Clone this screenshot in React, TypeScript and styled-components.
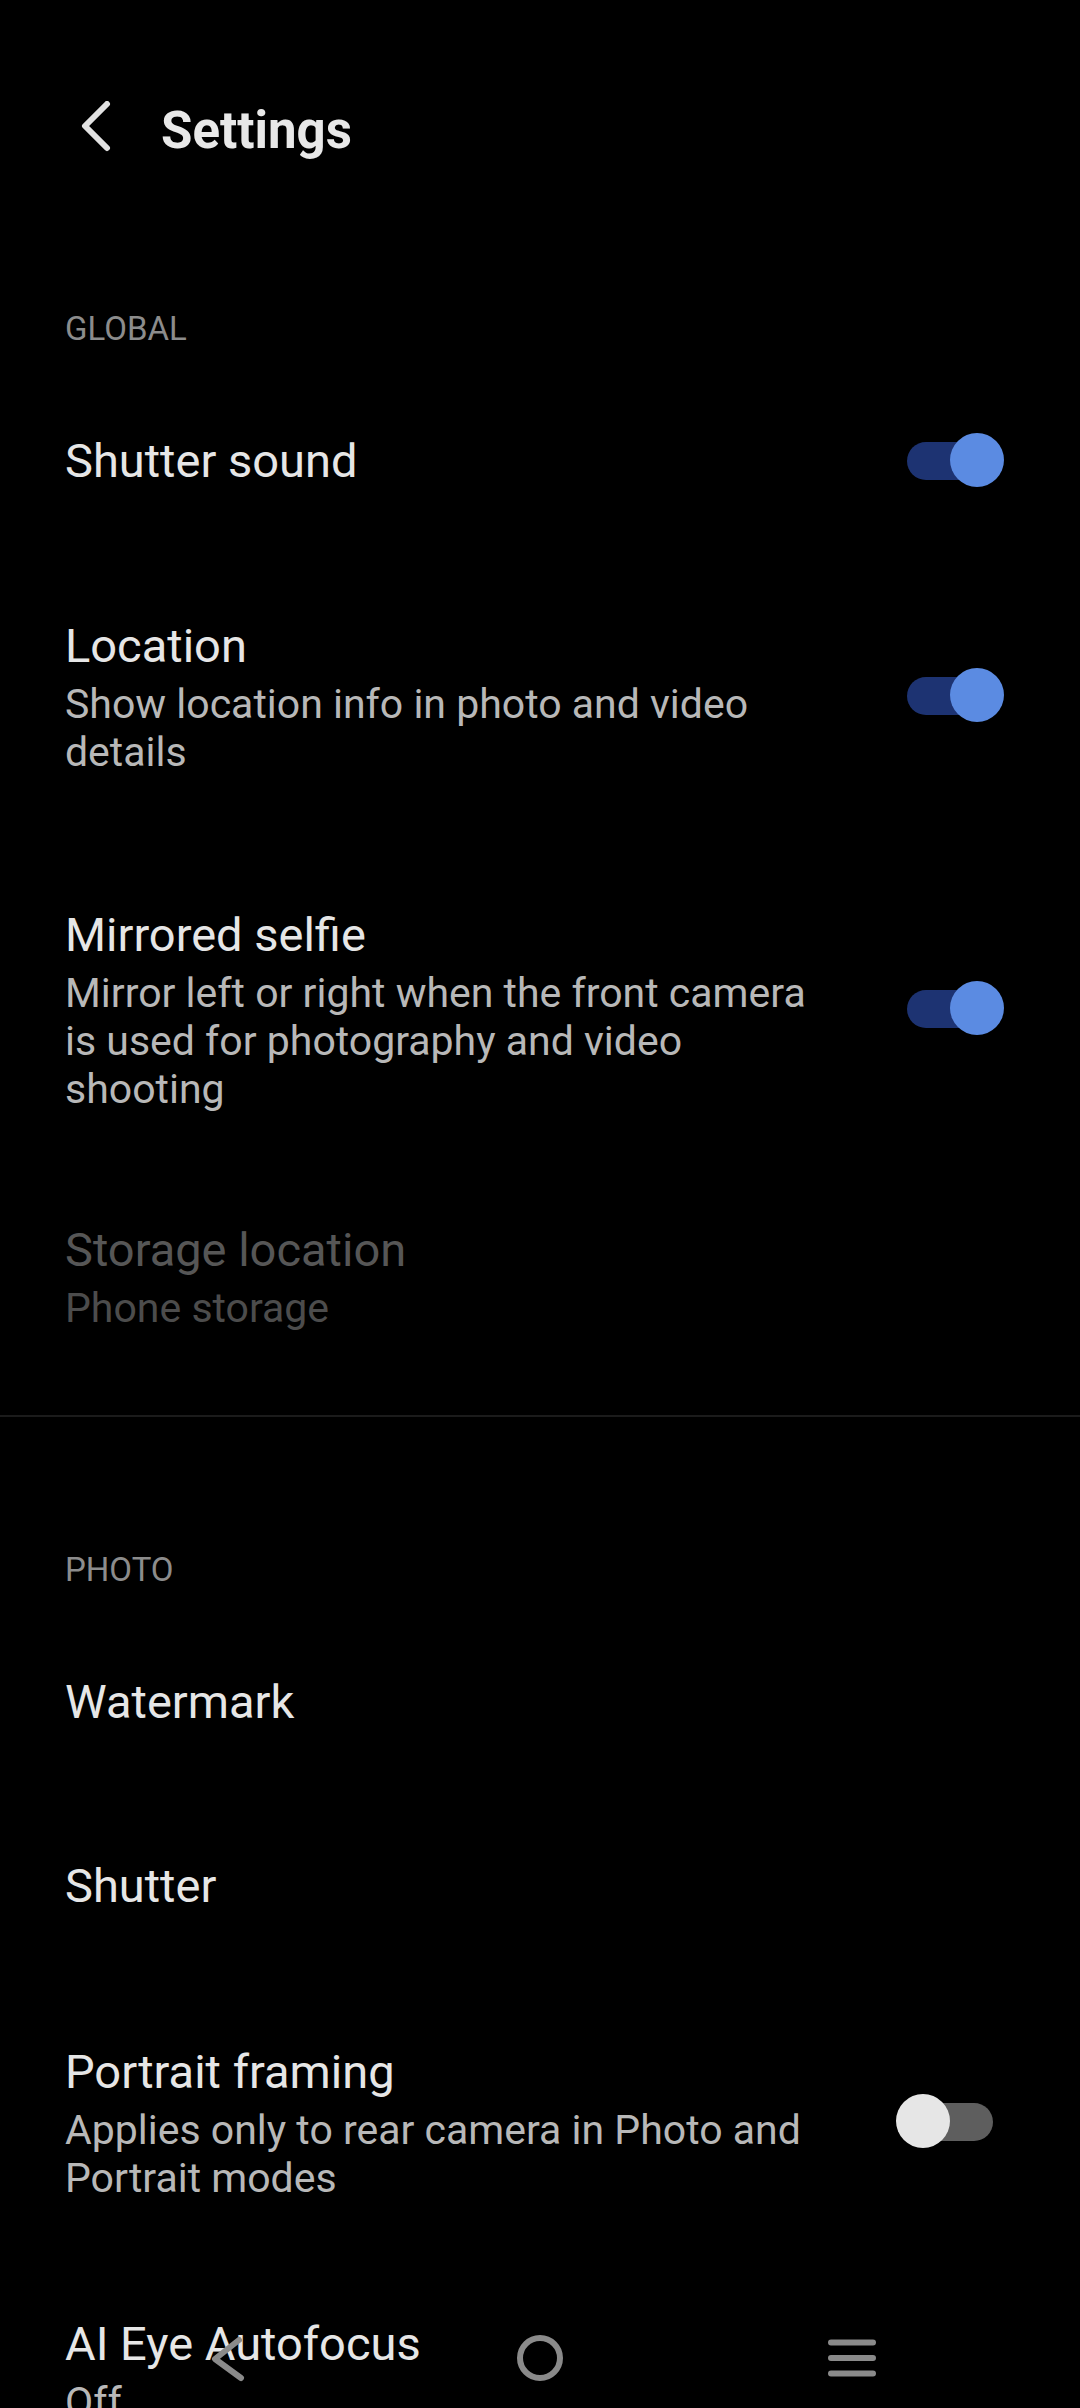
import React from "react";
import styled, { createGlobalStyle } from "styled-components";

const Global = createGlobalStyle`
  html, body {
    margin: 0;
    padding: 0;
    background: #000;
  }
  body {
    font-family: Roboto, "Noto Sans", "Liberation Sans", sans-serif;
    -webkit-font-smoothing: antialiased;
  }
`;

const Screen = styled.div`
  position: relative;
  width: 1080px;
  height: 2408px;
  overflow: hidden;
  background: #000;
  color: #e6e6e6;
  font-family: Roboto, "Noto Sans", "Liberation Sans", sans-serif;
`;

const Header = styled.header`
  display: flex;
  align-items: center;
  height: 262px;
  padding-left: 72px;
  gap: 41px;
`;

const BackButton = styled.svg`
  width: 48px;
  height: 60px;
  flex: none;
`;

const Title = styled.h1`
  margin: 0;
  font-size: 51px;
  line-height: 60px;
  font-weight: 700;
  color: #e8e8e8;
`;

const SectionLabel = styled.div`
  padding: 47px 65px 20px;
  font-size: 33px;
  line-height: 40px;
  color: #8c8c8c;
`;

const Divider = styled.div`
  height: 2px;
  background: #1b1b1b;
  margin-bottom: 86px;
`;

const Row = styled.div<{ $pt: number; $pb: number }>`
  display: flex;
  align-items: center;
  padding: ${(p) => p.$pt}px 76px ${(p) => p.$pb}px 65px;
`;

const TextCol = styled.div`
  flex: 1;
  min-width: 0;
  display: flex;
  flex-direction: column;
`;

const RowTitle = styled.div<{ $disabled?: boolean }>`
  font-size: 47px;
  line-height: 60px;
  color: ${(p) => (p.$disabled ? "#565656" : "#e6e6e6")};
`;

const RowSub = styled.div<{ $disabled?: boolean }>`
  margin-top: 4px;
  font-size: 41px;
  line-height: 48px;
  color: ${(p) => (p.$disabled ? "#4c4c4c" : "#b8b8b8")};
`;

const SwitchBox = styled.div`
  position: relative;
  flex: none;
  width: 108px;
  height: 54px;
  margin-left: 62px;
`;

const Track = styled.div<{ $on: boolean }>`
  position: absolute;
  left: 11px;
  right: 11px;
  top: 8px;
  height: 38px;
  border-radius: 19px;
  background: ${(p) => (p.$on ? "#1d3372" : "#5e5e5e")};
`;

const Knob = styled.div<{ $on: boolean }>`
  position: absolute;
  top: -1px;
  left: ${(p) => (p.$on ? "54px" : "0")};
  width: 54px;
  height: 54px;
  border-radius: 50%;
  background: ${(p) => (p.$on ? "#5b8be2" : "#e6e6e6")};
`;

const NavBar = styled.nav`
  position: absolute;
  left: 0;
  right: 0;
  bottom: 0;
  height: 100px;
  display: grid;
  grid-template-columns: repeat(3, 312px);
  justify-content: center;
  align-items: center;
  pointer-events: none;
`;

const NavCell = styled.div`
  display: flex;
  align-items: center;
  justify-content: center;
`;

const NavIcon = styled.svg`
  display: block;
  color: #8a8a8a;
`;

function Switch({ on }: { on: boolean }) {
  return (
    <SwitchBox>
      <Track $on={on} />
      <Knob $on={on} />
    </SwitchBox>
  );
}

type Item = {
  title: string;
  sub?: string;
  toggle?: boolean;
  disabled?: boolean;
  pt: number;
  pb: number;
};

function SettingRow({ item }: { item: Item }) {
  return (
    <Row $pt={item.pt} $pb={item.pb}>
      <TextCol>
        <RowTitle $disabled={item.disabled}>{item.title}</RowTitle>
        {item.sub && <RowSub $disabled={item.disabled}>{item.sub}</RowSub>}
      </TextCol>
      {item.toggle !== undefined && <Switch on={item.toggle} />}
    </Row>
  );
}

const globalItems: Item[] = [
  { title: "Shutter sound", toggle: true, pt: 62, pb: 62 },
  {
    title: "Location",
    sub: "Show location info in photo and video details",
    toggle: true,
    pt: 63,
    pb: 64,
  },
  {
    title: "Mirrored selfie",
    sub: "Mirror left or right when the front camera is used for photography and video shooting",
    toggle: true,
    pt: 65,
    pb: 62,
  },
  { title: "Storage location", sub: "Phone storage", disabled: true, pt: 45, pb: 83 },
];

const photoItems: Item[] = [
  { title: "Watermark", pt: 62, pb: 62 },
  { title: "Shutter", pt: 62, pb: 62 },
  {
    title: "Portrait framing",
    sub: "Applies only to rear camera in Photo and Portrait modes",
    toggle: false,
    pt: 64,
    pb: 62,
  },
  { title: "AI Eye Autofocus", sub: "Off", pt: 50, pb: 62 },
];

export default function App() {
  return (
    <Screen>
      <Global />
      <Header>
        <BackButton viewBox="0 0 48 60" fill="none">
          <path
            d="M35 3 L13 25 L35 47"
            stroke="#e2e2e2"
            strokeWidth="6"
            strokeLinecap="round"
            strokeLinejoin="round"
          />
        </BackButton>
        <Title>Settings</Title>
      </Header>

      <SectionLabel>GLOBAL</SectionLabel>
      {globalItems.map((it) => (
        <SettingRow key={it.title} item={it} />
      ))}
      <Divider />

      <SectionLabel>PHOTO</SectionLabel>
      {photoItems.map((it) => (
        <SettingRow key={it.title} item={it} />
      ))}

      <NavBar>
        <NavCell>
          <NavIcon width="40" height="50" viewBox="0 0 40 50" fill="none">
            <path
              d="M31 7 L7 26 L33 45"
              stroke="currentColor"
              strokeWidth="6"
              strokeLinecap="round"
              strokeLinejoin="round"
            />
          </NavIcon>
        </NavCell>
        <NavCell>
          <NavIcon width="52" height="52" viewBox="0 0 52 52" fill="none">
            <circle cx="26" cy="26" r="20" stroke="currentColor" strokeWidth="6" />
          </NavIcon>
        </NavCell>
        <NavCell>
          <NavIcon width="48" height="44" viewBox="0 0 48 44" fill="none">
            <path
              d="M3 6.5 H45 M3 22 H45 M3 37.5 H45"
              stroke="currentColor"
              strokeWidth="6"
              strokeLinecap="round"
            />
          </NavIcon>
        </NavCell>
      </NavBar>
    </Screen>
  );
}
